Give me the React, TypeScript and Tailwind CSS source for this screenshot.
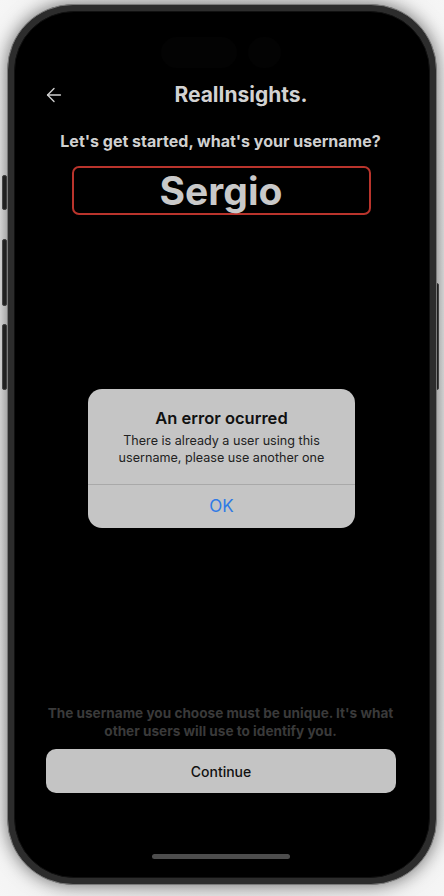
import { ArrowLeft } from "lucide-react";

const font = { fontFamily: "Inter, 'Liberation Sans', sans-serif" };

function SideButton({ className }: { className: string }) {
  return (
    <div
      className={`absolute w-[5px] rounded-[2px] border border-[#555] bg-[#2b2b2b] ${className}`}
    />
  );
}

function ErrorAlert() {
  return (
    <div className="absolute left-[73px] top-[377px] w-[267px] overflow-hidden rounded-[14px] bg-[#c5c5c5]">
      <div className="px-4 pb-[18px] pt-[18px] text-center">
        <div className="text-[16.5px] font-semibold leading-[22px] text-[#111]">
          An error ocurred
        </div>
        <div className="mt-[3px] text-[12.6px] leading-[17px] text-[#222]">
          There is already a user using this
          <br />
          username, please use another one
        </div>
      </div>
      <div className="h-px bg-[#a9a9a9]" />
      <button
        type="button"
        className="flex h-[43px] w-full items-center justify-center text-[17px] text-[#2f7ae5]"
      >
        OK
      </button>
    </div>
  );
}

export default function App() {
  return (
    <main
      className="relative h-[896px] w-[444px] overflow-hidden bg-[radial-gradient(ellipse_at_center,#bdbdbd_0%,#e6e6e6_60%,#f6f6f6_100%)] pt-[4px]"
      style={font}
    >
      {/* side buttons */}
      <SideButton className="left-[2px] top-[175px] h-[35px]" />
      <SideButton className="left-[2px] top-[239px] h-[67px]" />
      <SideButton className="left-[2px] top-[324px] h-[66px]" />
      <SideButton className="left-[434px] top-[283px] h-[107px]" />

      {/* phone */}
      <div className="relative mx-auto h-[881px] w-[430px] rounded-[66px] border border-[#7a7a7a] bg-[#2c2c2c] p-[6px] shadow-[0_0_18px_rgba(0,0,0,0.55)]">
        <div className="relative flex h-full flex-col rounded-[60px] border border-[#111] bg-black">
          {/* dynamic island */}
          <div className="absolute left-[146px] top-[25px] h-[31px] w-[76px] rounded-full bg-[#030303]" />
          <div className="absolute left-[233px] top-[25px] h-[31px] w-[33px] rounded-full bg-[#030303]" />

          {/* header */}
          <div className="mt-[69px] flex h-7 items-center pl-[28px] pr-[12px]">
            <ArrowLeft size={22} strokeWidth={1.5} className="text-[#cfcfcf]" />
            <div className="flex-1 text-center text-[21px] font-bold text-[#d2d2d2]">
              RealInsights.
            </div>
          </div>

          <div className="mt-[22px] pr-[3px] text-center text-[16px] font-bold leading-5 text-[#d0d0d0]">
            Let's get started, what's your username?
          </div>

          <div className="mx-auto mt-[15px] flex h-[49px] w-[299px] -translate-x-[1px] items-center justify-center rounded-[7px] border-2 border-[#b9342c]">
            <span className="text-[39px] font-bold leading-none text-[#c9c9c9]">
              Sergio
            </span>
          </div>

          <div className="flex-1" />

          <div className="pr-[3px] text-center text-[13.6px] font-bold leading-[18px] text-[#3a3a3a]">
            The username you choose must be unique. It's what
            <br />
            other users will use to identify you.
          </div>

          <button
            type="button"
            className="mx-auto mt-[9px] flex h-[44px] w-[350px] -translate-x-[1px] items-center justify-center rounded-[10px] bg-[#c4c4c4] text-[14px] font-medium text-[#111]"
          >
            Continue
          </button>

          <div className="mx-auto mb-[18px] mt-[61px] h-[5px] w-[138px] -translate-x-[1px] rounded-full bg-[#4d4d4d]" />

          <ErrorAlert />
        </div>
      </div>
    </main>
  );
}
